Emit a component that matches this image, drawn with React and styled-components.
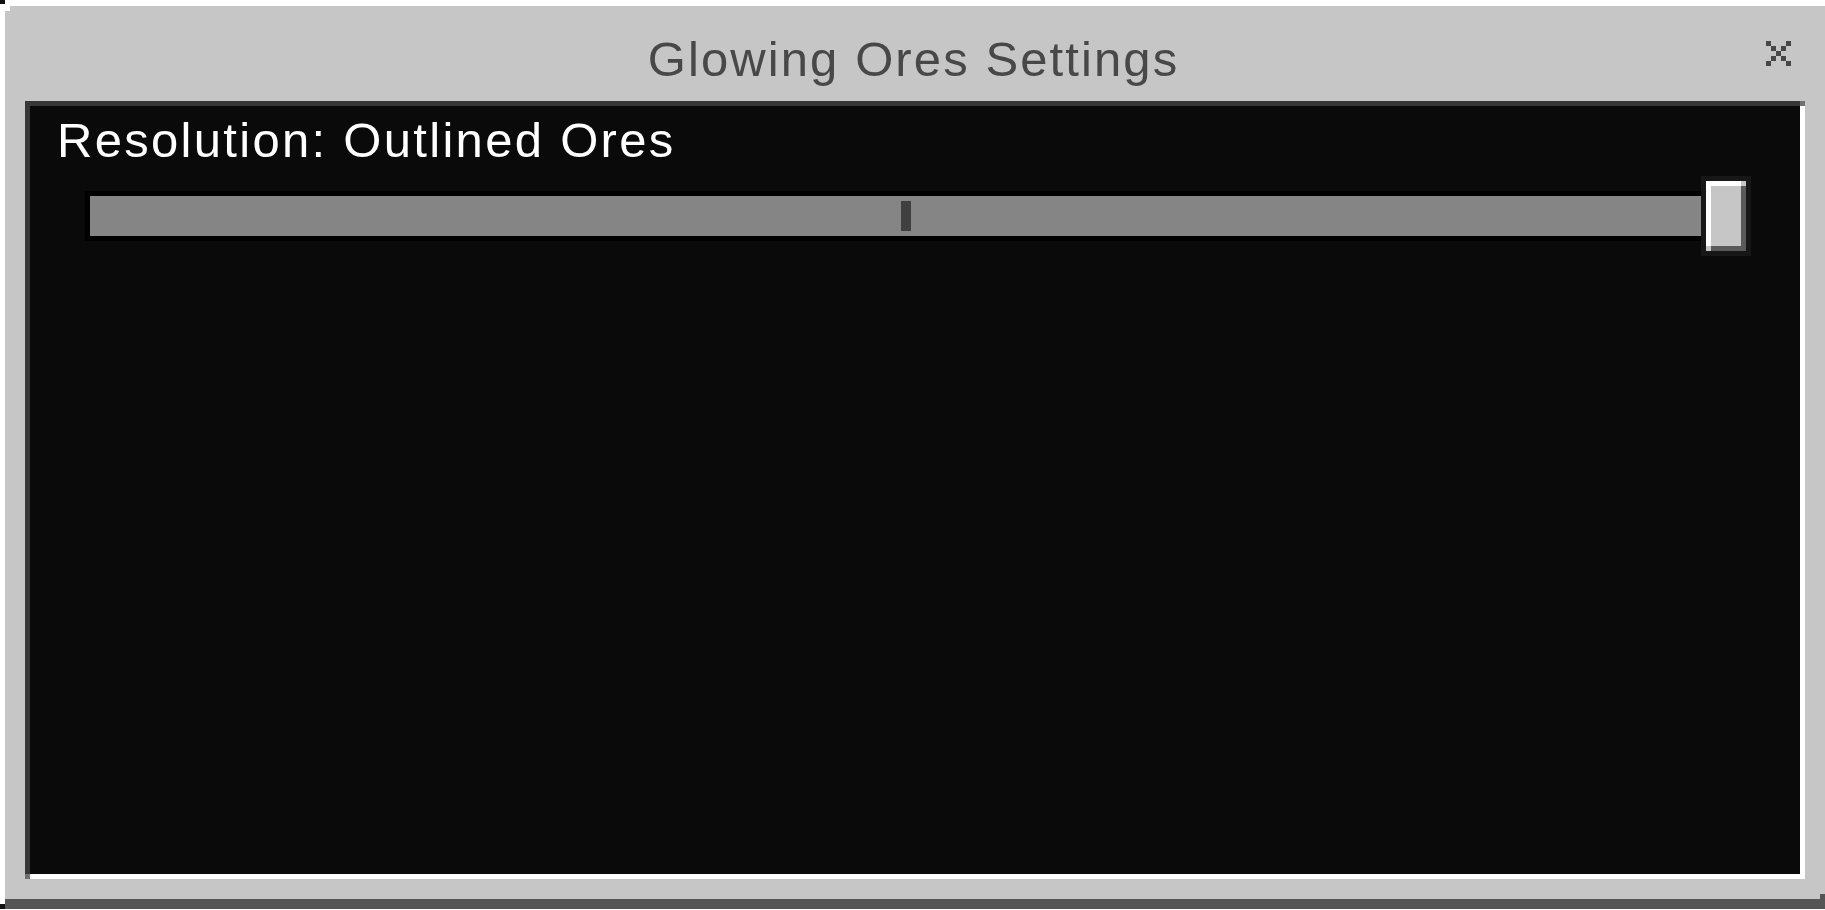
import React from "react";
import styled, { createGlobalStyle } from "styled-components";

const GlobalStyle = createGlobalStyle`
  html, body {
    margin: 0;
    padding: 0;
    background: #ffffff;
    overflow: hidden;
  }
  body {
    font-family: "Liberation Sans", Arial, sans-serif;
  }
`;

const Screen = styled.div`
  position: relative;
  width: 1825px;
  height: 910px;
  padding: 6px 0 0 5px;
  box-sizing: border-box;
  overflow: hidden;

  &::before,
  &::after {
    content: "";
    position: absolute;
    left: 0;
    width: 5px;
    background: #111111;
  }
  &::before {
    top: 0;
    height: 4px;
  }
  &::after {
    top: 904px;
    height: 5px;
  }
`;

const Window = styled.div`
  position: relative;
  width: 1820px;
  height: 893px;
  background: #c6c6c6;
  border-bottom: 10px solid #555555;
  display: flex;
  flex-direction: column;

  &::before {
    content: "";
    position: absolute;
    top: 0;
    left: 0;
    width: 5px;
    height: 5px;
    background: #ffffff;
  }
  &::after {
    content: "";
    position: absolute;
    right: 0;
    bottom: 0;
    width: 5px;
    height: 5px;
    background: #555555;
  }
`;

const TitleBar = styled.div`
  height: 95px;
  box-sizing: border-box;
  padding: 29px 3px 0 0;
  display: flex;
  justify-content: center;
`;

const Title = styled.h1`
  margin: 0;
  font-size: 49px;
  line-height: 49px;
  font-weight: 400;
  letter-spacing: 2.1px;
  color: #484848;
`;

const CloseButton = styled.button`
  position: absolute;
  top: 35px;
  right: 34px;
  width: 25px;
  height: 25px;
  padding: 0;
  border: 0;
  background: none;
  cursor: pointer;
  svg {
    display: block;
  }
`;

const Panel = styled.div`
  position: relative;
  margin-left: 20px;
  width: 1780px;
  height: 778px;
  box-sizing: border-box;
  background: #0a0a0a;
  border-style: solid;
  border-width: 5px;
  border-color: #373737 #ffffff #ffffff #373737;
  padding-top: 9.5px;
  display: flex;
  flex-direction: column;

  &::before,
  &::after {
    content: "";
    position: absolute;
    width: 5px;
    height: 5px;
    background: #707070;
  }
  &::before {
    top: -5px;
    right: -5px;
  }
  &::after {
    bottom: -5px;
    left: -5px;
  }
`;

const Label = styled.div`
  margin-left: 27px;
  font-size: 49px;
  line-height: 49px;
  letter-spacing: 2.3px;
  color: #ffffff;
`;

const Slider = styled.div`
  position: relative;
  margin: 11.5px 0 0 55px;
  width: 1666px;
  height: 80px;
  display: flex;
  align-items: center;
`;

const Track = styled.div`
  position: relative;
  width: 1660px;
  height: 50px;
  box-sizing: border-box;
  background: #858585;
  border: 5px solid #000000;
`;

const Tick = styled.div`
  position: absolute;
  left: 811px;
  top: 5px;
  width: 10px;
  height: 30px;
  background: #404040;
`;

const Thumb = styled.div`
  position: absolute;
  top: 0;
  right: 0;
  width: 50px;
  height: 80px;
  box-sizing: border-box;
  border: 5px solid #171717;
`;

const ThumbFace = styled.div`
  position: relative;
  width: 40px;
  height: 70px;
  box-sizing: border-box;
  background: #c6c6c6;
  border-style: solid;
  border-width: 5px;
  border-color: #ffffff #5a5a5a #5a5a5a #ffffff;

  &::before,
  &::after {
    content: "";
    position: absolute;
    width: 5px;
    height: 5px;
    background: #c6c6c6;
  }
  &::before {
    top: -5px;
    right: -5px;
  }
  &::after {
    bottom: -5px;
    left: -5px;
  }
`;

const CloseIcon = () => {
  const cells = [
    [0, 0], [4, 0],
    [1, 1], [3, 1],
    [2, 2],
    [1, 3], [3, 3],
    [0, 4], [4, 4],
  ];
  return (
    <svg width="25" height="25" viewBox="0 0 25 25" shapeRendering="crispEdges">
      {cells.map(([x, y]) => (
        <rect key={`${x}-${y}`} x={x * 5} y={y * 5} width="5" height="5" fill="#474747" />
      ))}
    </svg>
  );
};

const App = () => {
  return (
    <>
      <GlobalStyle />
      <Screen>
        <Window>
          <TitleBar>
            <Title>Glowing Ores Settings</Title>
          </TitleBar>
          <CloseButton aria-label="Close">
            <CloseIcon />
          </CloseButton>
          <Panel>
            <Label>Resolution: Outlined Ores</Label>
            <Slider>
              <Track>
                <Tick />
              </Track>
              <Thumb>
                <ThumbFace />
              </Thumb>
            </Slider>
          </Panel>
        </Window>
      </Screen>
    </>
  );
};

export default App;
